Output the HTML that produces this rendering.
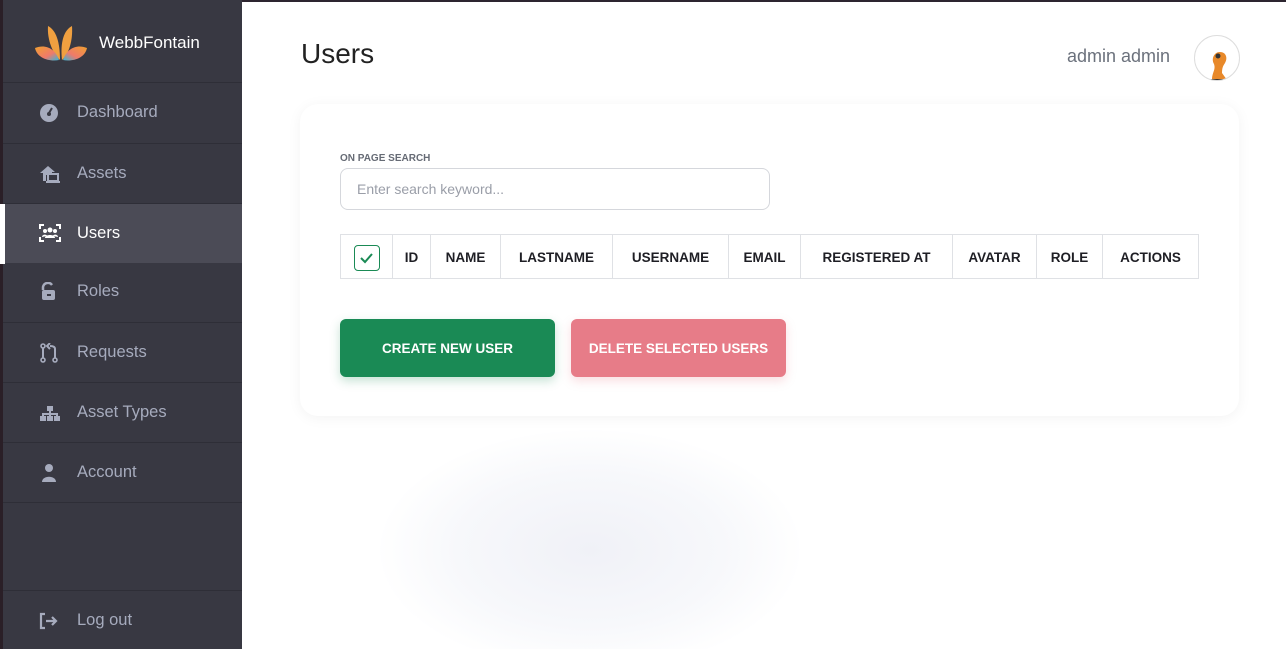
<!DOCTYPE html>
<html style="overflow:hidden;height:649px"><head><style>
*{box-sizing:border-box;margin:0;padding:0}
body{width:1286px;height:649px;overflow:hidden;font-family:"Liberation Sans",sans-serif;background:#fff;position:relative}
.top{position:absolute;left:0;top:0;width:1286px;height:2px;background:#2d2530}
.sb{position:absolute;left:0;top:0;width:242px;height:649px;background:#383842;border-left:3px solid #2a1f27}
.logo{position:absolute;left:30px;top:24px}
.brand{position:absolute;left:96px;top:33px;color:#fff;font-size:17px}
.item{position:absolute;left:0;width:239px;height:60px;border-top:1px solid #2e2e37;color:#a6abbd;font-size:16.5px}
.item span{position:absolute;left:74px;top:20px}
.item svg{position:absolute;left:36px;top:20px}
.act{background:#4b4b56;color:#fff}
.act:before{content:"";position:absolute;left:-3px;top:0;width:5px;height:60px;background:#fff}
h1{position:absolute;left:301px;top:38px;font-weight:normal;font-size:28px;color:#222}
.user{position:absolute;left:1067px;top:46px;font-size:18px;color:#6b717c}
.av{position:absolute;left:1194px;top:35px;width:46px;height:46px;border-radius:50%;border:1px solid #ddd;background:#fff;overflow:hidden}
.glow{position:absolute;left:380px;top:430px;width:420px;height:240px;border-radius:50%;background:radial-gradient(ellipse,#f0f1f7 0%,#f7f8fb 45%,rgba(255,255,255,0) 72%)}
.card{position:absolute;left:300px;top:104px;width:939px;height:312px;background:#fff;border-radius:18px;box-shadow:0 2px 14px rgba(0,0,0,.05)}
.lbl{position:absolute;left:40px;top:49px;font-size:10px;font-weight:bold;color:#666b75}
.inp{position:absolute;left:40px;top:64px;width:430px;height:42px;border:1px solid #d5d7dc;border-radius:8px;color:#9a9ea8;font-size:14px;padding:12px 16px}
table{position:absolute;left:40px;top:130px;border-collapse:collapse;height:45px}
td{border:1px solid #dfe1e5;font-size:13.5px;font-weight:bold;color:#1e1e24;text-align:center;padding:2px 0 0}
.cb{display:inline-block;width:26px;height:26px;border:1.5px solid #1a8a55;border-radius:4px;vertical-align:middle}
.btn{position:absolute;top:215px;height:58px;border-radius:6px;color:#fff;font-size:13.5px;font-weight:bold;text-align:center;line-height:60px}
</style></head><body>
<div class="top"></div>
<div class="glow"></div>
<div class="sb">
<svg class="logo" width="56" height="40" viewBox="0 0 56 40"><defs><linearGradient id="g" x1="0" y1="0" x2="1" y2="1"><stop offset="0" stop-color="#f0a030"/><stop offset=".6" stop-color="#ef7a6a"/><stop offset="1" stop-color="#36b6d8"/></linearGradient><linearGradient id="g2" x1="1" y1="0" x2="0" y2="1"><stop offset="0" stop-color="#f0a030"/><stop offset=".6" stop-color="#ef7a6a"/><stop offset="1" stop-color="#36b6d8"/></linearGradient></defs><path d="M27 36C20 30 14 16 15 2c8 4 12 16 12 34z" fill="#f0a040"/><path d="M29 36C36 30 40 16 39 2c-8 4-12 16-10 34z" fill="#f0a040"/><path d="M26 36C16 38 4 34 2 24c10-4 20 0 24 12z" fill="url(#g)"/><path d="M30 36C40 38 52 34 54 24c-10-4-20 0-24 12z" fill="url(#g2)"/></svg>
<div class="brand">WebbFontain</div>
<div class="item" style="top:82px"><svg width="20" height="20" viewBox="0 0 20 20"><circle cx="10" cy="10" r="9" fill="#a6abbd"/><path d="M10 10l3-5" stroke="#383842" stroke-width="2"/><circle cx="10" cy="11" r="2" fill="#383842"/></svg><span>Dashboard</span></div>
<div class="item" style="top:143px"><svg width="22" height="20" viewBox="0 0 22 20"><path d="M1 9L9 2l7 6H13v3H7v6H4V9z" fill="#a6abbd"/><rect x="9" y="10" width="10" height="7" fill="none" stroke="#a6abbd" stroke-width="2"/><rect x="7" y="17" width="14" height="2" fill="#a6abbd"/></svg><span>Assets</span></div>
<div class="item act" style="top:203px"><svg width="22" height="18" viewBox="0 0 22 18"><path d="M1 5V1h4M17 1h4v4M1 13v4h4M17 17h4v-4" stroke="#fff" stroke-width="2" fill="none"/><circle cx="11" cy="6" r="2.5" fill="#fff"/><circle cx="6" cy="7" r="2" fill="#fff"/><circle cx="16" cy="7" r="2" fill="#fff"/><path d="M6 14c0-4 10-4 10 0zM3 13c0-3 5-3 5-1zM14 12c0-2 5-2 5 1z" fill="#fff"/></svg><span>Users</span></div>
<div class="item" style="top:262px;border-top:none"><svg width="20" height="20" viewBox="0 0 20 20"><path d="M4 8V5a5 5 0 019-2" stroke="#a6abbd" stroke-width="2.5" fill="none"/><rect x="3" y="8" width="13" height="10" rx="2" fill="#a6abbd"/><rect x="8" y="12" width="4" height="2" fill="#383842"/></svg><span>Roles</span></div>
<div class="item" style="top:322px"><svg width="20" height="20" viewBox="0 0 20 20"><circle cx="4" cy="3" r="2" stroke="#a6abbd" stroke-width="1.6" fill="none"/><circle cx="4" cy="17" r="2" stroke="#a6abbd" stroke-width="1.6" fill="none"/><circle cx="16" cy="17" r="2" stroke="#a6abbd" stroke-width="1.6" fill="none"/><path d="M4 5v10M16 15V6c0-2-2-3-5-3M11 0l-3 3 3 3" stroke="#a6abbd" stroke-width="2" fill="none"/></svg><span>Requests</span></div>
<div class="item" style="top:382px"><svg width="22" height="20" viewBox="0 0 22 20"><rect x="8" y="3" width="6" height="5" fill="#a6abbd"/><path d="M4 14v-3h14v3M11 8v6" stroke="#a6abbd" stroke-width="2" fill="none"/><rect x="1" y="13" width="6" height="5" fill="#a6abbd"/><rect x="8" y="13" width="6" height="5" fill="#a6abbd"/><rect x="15" y="13" width="6" height="5" fill="#a6abbd"/></svg><span>Asset Types</span></div>
<div class="item" style="top:442px"><svg width="20" height="20" viewBox="0 0 20 20"><circle cx="10" cy="5" r="4" fill="#a6abbd"/><path d="M3 19c0-7 14-7 14 0z" fill="#a6abbd"/></svg><span>Account</span></div>
<div class="item" style="top:502px;height:88px"></div>
<div class="item" style="top:590px"><svg width="20" height="20" viewBox="0 0 20 20"><path d="M6 3H2v14h4" stroke="#a6abbd" stroke-width="2.2" fill="none"/><path d="M7 10h10M13 6l4 4-4 4" stroke="#a6abbd" stroke-width="2.2" fill="none"/></svg><span>Log out</span></div>
</div>
<h1>Users</h1>
<div class="user">admin admin</div>
<div class="av"><svg width="46" height="46" viewBox="0 0 46 46"><path d="M17 44c0-8 4-10 2-16-3-5 0-12 6-12s8 6 5 11c-2 3-3 5-3 10l5 7z" fill="#e8892a"/><circle cx="23" cy="20" r="2.5" fill="#333"/><path d="M14 44h20" stroke="#333" stroke-width="2"/></svg></div>
<div class="card">
<div class="lbl">ON PAGE SEARCH</div>
<div class="inp">Enter search keyword...</div>
<table><tr>
<td style="width:52px"><span class="cb"><svg width="23" height="23" viewBox="0 0 23 23"><path d="M6 12l4 4 7-8" stroke="#1a8a55" stroke-width="2" fill="none"/></svg></span></td>
<td style="width:38px">ID</td><td style="width:70px">NAME</td><td style="width:112px">LASTNAME</td><td style="width:116px">USERNAME</td><td style="width:72px">EMAIL</td><td style="width:152px">REGISTERED AT</td><td style="width:84px">AVATAR</td><td style="width:66px">ROLE</td><td style="width:96px">ACTIONS</td>
</tr></table>
<div class="btn" style="left:40px;width:215px;background:#1a8a55;box-shadow:0 4px 10px rgba(26,138,85,.25)">CREATE NEW USER</div>
<div class="btn" style="left:271px;width:215px;background:#e77c88;box-shadow:0 4px 10px rgba(231,124,136,.25)">DELETE SELECTED USERS</div>
</div>
</body></html>
